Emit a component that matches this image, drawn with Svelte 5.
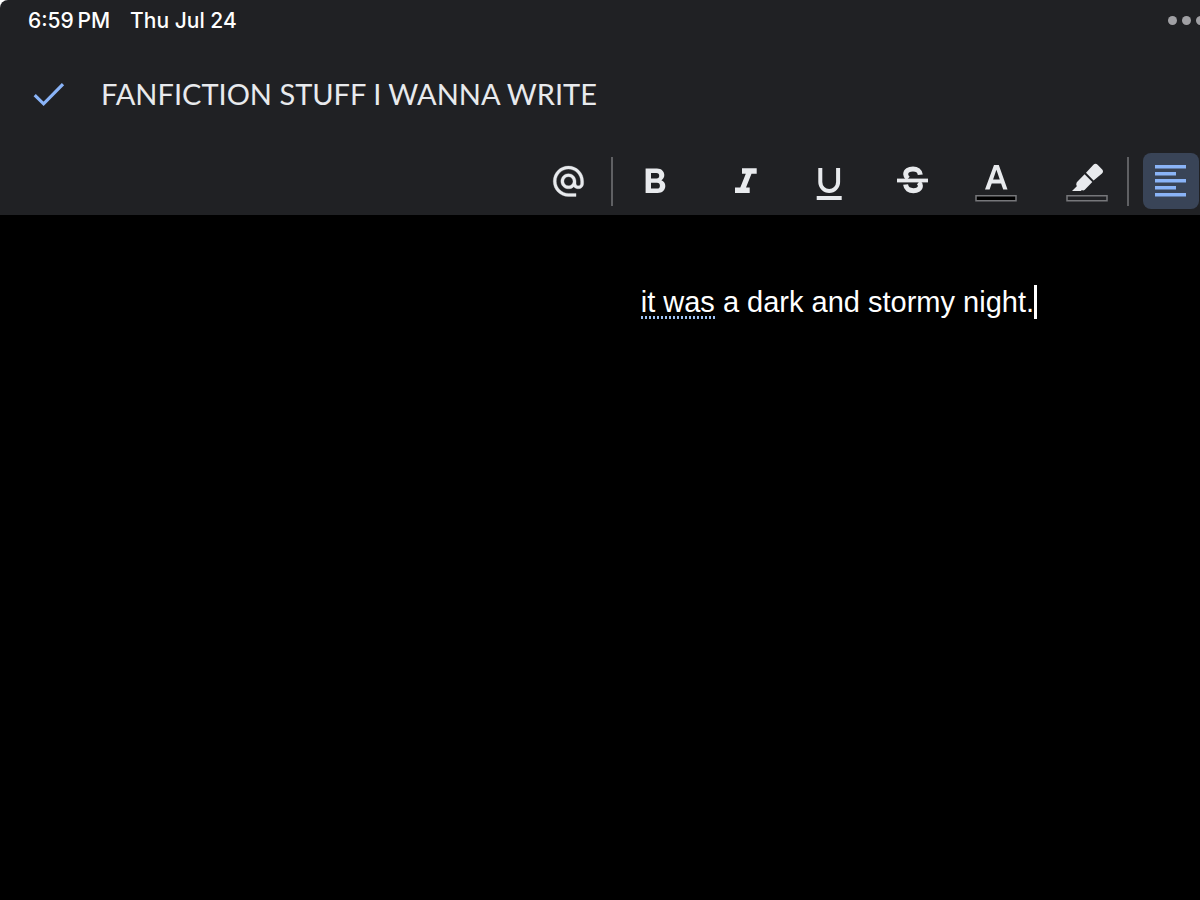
<script>
  let title = $state('FANFICTION STUFF I WANNA WRITE');
  let active = $state('align');
</script>

<div class="app">
  <header>
    <div class="status">
      <span>6:59&#8202;&#8202;PM</span>
      <span>Thu Jul 24</span>
      <button class="dots" aria-label="Multitasking"><i></i><i></i><i></i></button>
    </div>

    <div class="titlebar">
      <button class="done" aria-label="Done">
        <svg width="32" height="26" viewBox="0 0 32 26">
          <path d="M1.7 14.2 L10.6 22.8 L30 3.2" fill="none" stroke="#8ab4f8" stroke-width="3.2" />
        </svg>
      </button>
      <h1>{title}</h1>
    </div>

    <div class="toolbar" role="toolbar" aria-label="Formatting">
      <button class="tool" aria-label="Mention">
        <svg viewBox="0 0 56 56">
          <path transform="translate(9.2 10.1) scale(1.52)" stroke="#e8eaed" stroke-width="0.2" d="M12 1.95c-5.52 0-10 4.48-10 10s4.48 10 10 10h5v-2h-5c-4.34 0-8-3.66-8-8s3.66-8 8-8 8 3.66 8 8v1.43c0 .79-.71 1.57-1.5 1.57s-1.5-.78-1.5-1.57v-1.43c0-2.76-2.24-5-5-5s-5 2.24-5 5 2.24 5 5 5c1.38 0 2.64-.56 3.54-1.47.65.89 1.77 1.47 2.96 1.47 1.97 0 3.5-1.6 3.5-3.57v-1.43c0-5.52-4.48-10-10-10zm0 13c-1.66 0-3-1.34-3-3s1.34-3 3-3 3 1.34 3 3-1.34 3-3 3z" />
        </svg>
      </button>
      <span class="rule"></span>
      <button class="tool" aria-label="Bold">
        <svg viewBox="0 0 56 56">
          <path fill-rule="evenodd" d="M18.6 15.5H30C34.5 15.5 37.3 18.4 37.3 22.1C37.3 24.4 36.2 26.3 34.4 27.3C36.9 28.2 38.3 30.4 38.3 33C38.3 37.2 35.2 40 30.6 40H18.6ZM24 20V25.4H29.5a2.7 2.7 0 0 0 0-5.4ZM24 29.8V35.6H30a2.9 2.9 0 0 0 0-5.8Z" />
        </svg>
      </button>
      <div class="group">
        <button class="tool" aria-label="Italic">
          <svg viewBox="0 0 56 56">
            <path d="M25 15.3H39.7V20.8H34.5L29 34.6H32.7V40H18V34.6H23.3L28.8 20.8H25Z" />
          </svg>
        </button>
        <button class="tool" aria-label="Underline">
          <svg viewBox="0 0 56 56">
            <path d="M19.3 15V29a8.9 9 0 0 0 17.8 0V15" fill="none" stroke="#e8eaed" stroke-width="4" />
            <path d="M15.7 43H40.7V47H15.7Z" />
          </svg>
        </button>
        <button class="tool" aria-label="Strikethrough">
          <svg viewBox="0 0 56 56">
            <path d="M12 25.6H43V29.4H12Z" />
            <path d="M35.3 21.8C35 18 32 16 28 16C23.8 16 20.7 18 20.7 21.3C20.7 23 21.5 24.2 23 25.6M33.5 29.4C34.8 30.4 35.4 31.6 35.4 32.8C35.4 36 32.4 37.7 28.4 37.7C24.2 37.7 21 35.6 20.6 31.6" fill="none" stroke="#e8eaed" stroke-width="5" />
          </svg>
        </button>
        <button class="tool" aria-label="Text color">
          <svg viewBox="0 0 56 56">
            <path fill-rule="evenodd" d="M25 12H29.8L38.5 36.5H34.2L32.1 30.5H22.7L20.6 36.5H16ZM24.1 26.6H30.8L27.4 16.8Z" />
            <path d="M7 42.8H47V47.8H7Z" fill="#000" stroke="#76777a" stroke-width="1.5" />
          </svg>
        </button>
      </div>
      <button class="tool" aria-label="Highlight color">
        <svg viewBox="0 0 56 56">
          <path d="M29 19.8L36.4 11.8Q38.5 9.8 40.6 11.8L45 16.2Q47 18.4 45 20.4L36.6 27.5ZM27.6 21.2L35.3 29L27.8 36.7Q26.4 38 24.8 37L24 38H15L19.8 33.2Q18.6 31 19.8 29.2Z" />
          <path d="M10 42.8H50V47.8H10Z" fill="none" stroke="#76777a" stroke-width="1.5" />
        </svg>
      </button>
      <span class="rule"></span>
      <button class="tool" class:active={active === 'align'} aria-label="Align left" aria-pressed={active === 'align'}>
        <svg viewBox="0 0 56 56">
          <path d="M12 12h31v3.5H12ZM12 19h21v3.5H12ZM12 26h31v3.5H12ZM12 33h21v3.5H12ZM12 40h31v3.5H12Z" />
        </svg>
      </button>
    </div>
  </header>

  <main>
    <p><span class="grammar">it was</span> a dark and stormy night.<span class="caret"></span></p>
  </main>
</div>

<style>
  :global(body) {
    margin: 0;
    background: #000;
  }
  .app {
    min-height: 100vh;
    overflow: hidden;
    background: #000;
    font-family: 'Liberation Sans', Arial, sans-serif;
  }
  header {
    background: #202124;
    color: #e8eaed;
    border-top-left-radius: 8px;
    box-shadow: -8px -8px 0 8px #fff;
  }
  button {
    border: 0;
    padding: 0;
    background: none;
    color: inherit;
    flex: none;
  }
  svg {
    display: block;
  }
  .status {
    display: flex;
    align-items: center;
    gap: 20px;
    height: 41px;
    padding-left: 28px;
    font-family: Inter, sans-serif;
    font-size: 21px;
    font-weight: 500;
    color: #fff;
    white-space: nowrap;
  }
  .dots {
    display: flex;
    gap: 5px;
    margin-left: auto;
    margin-right: -5px;
  }
  .dots i {
    width: 9px;
    height: 9px;
    border-radius: 50%;
    background: #a0a0a4;
  }
  .titlebar {
    display: flex;
    align-items: center;
    gap: 36px;
    height: 106px;
    padding-left: 33px;
  }
  h1 {
    margin: 0;
    padding-bottom: 2px;
    font-family: Lato, sans-serif;
    font-size: 29px;
    font-weight: 400;
    white-space: nowrap;
  }
  .toolbar {
    display: flex;
    align-items: center;
    justify-content: flex-end;
    padding: 6px 1px 6px 0;
  }
  .tool {
    width: 56px;
    height: 56px;
    border-radius: 8px;
    fill: #e8eaed;
  }
  .tool.active {
    background: #394457;
    fill: #8ab4f8;
  }
  .group {
    display: flex;
    gap: 28px;
    margin: 0 32px 0 34px;
  }
  .rule {
    width: 2px;
    height: 49px;
    margin: 0 14px;
    background: #5f6063;
  }
  main {
    padding: 70px 163px 0 0;
  }
  p {
    display: flex;
    justify-content: flex-end;
    margin: 0;
    font-size: 29px;
    line-height: 34px;
    white-space: pre;
    color: #fff;
  }
  .grammar {
    background: repeating-linear-gradient(90deg, #9fc3f5 0 2px, transparent 2px 4px) 0 100% / 100% 3px no-repeat;
  }
  .caret {
    width: 3px;
    background: #fff;
  }
</style>
